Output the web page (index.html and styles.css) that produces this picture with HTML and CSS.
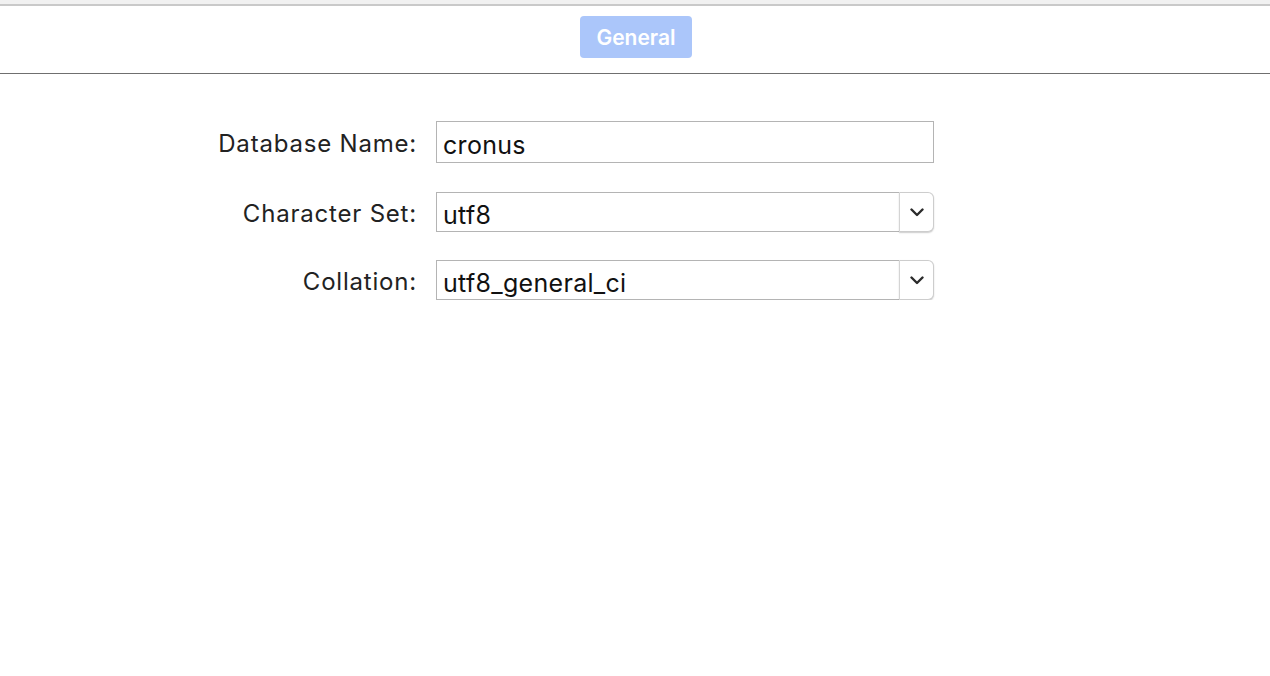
FILE: index.html
```html
<!DOCTYPE html>
<html>
<head>
<meta charset="utf-8">
<link rel="stylesheet" href="styles.css">
</head>
<body>
<div class="topstrip"></div>
<header class="toolbar">
  <div class="tab">General</div>
</header>
<main class="form">
  <label class="lbl lbl-first">Database Name:</label>
  <div class="field">cronus</div>

  <label class="lbl">Character Set:</label>
  <div class="select">
    <div class="select-value">utf8</div>
    <div class="select-btn">
      <svg width="14" height="9" viewBox="0 0 14 9"><path d="M1.5 1.5 L7 7 L12.5 1.5" fill="none" stroke="#2b2b2b" stroke-width="2.4" stroke-linecap="round" stroke-linejoin="round"/></svg>
    </div>
  </div>

  <label class="lbl lbl-third">Collation:</label>
  <div class="select select-third">
    <div class="select-value">utf8_general_ci</div>
    <div class="select-btn">
      <svg width="14" height="9" viewBox="0 0 14 9"><path d="M1.5 1.5 L7 7 L12.5 1.5" fill="none" stroke="#2b2b2b" stroke-width="2.4" stroke-linecap="round" stroke-linejoin="round"/></svg>
    </div>
  </div>
</main>
</body>
</html>
```
FILE: styles.css
```css
html, body {
  margin: 0;
  padding: 0;
  background: #ffffff;
  font-family: Inter, "Liberation Sans", Arial, sans-serif;
}
.topstrip {
  height: 4px;
  background: #f1f1f1;
  border-bottom: 2px solid #c9c9c9;
}
.toolbar {
  height: 68px;
  box-sizing: border-box;
  padding-top: 10px;
  border-bottom: 1px solid #6f6f6f;
  display: flex;
  justify-content: center;
}
.tab {
  width: 112px;
  height: 42px;
  margin-left: 2px;
  border-radius: 4px;
  background: #abc6fa;
  color: #ffffff;
  font-size: 21px;
  font-weight: 600;
  display: flex;
  align-items: center;
  justify-content: center;
}
.form {
  display: grid;
  grid-template-columns: 417px 498px;
  column-gap: 19px;
  padding-top: 47px;
  align-items: center;
}
.lbl {
  text-align: right;
  font-size: 24px;
  letter-spacing: 0.8px;
  color: #222222;
  margin-top: 29px;
  padding-top: 2px;
}
.lbl-first { margin-top: 0; }
.lbl-third { margin-top: 28px; }
.field {
  height: 42px;
  box-sizing: border-box;
  border: 1px solid #b4b4b4;
  padding-left: 6px;
  font-size: 25px;
  letter-spacing: 0.3px;
  color: #111;
  display: flex;
  align-items: center;
  padding-top: 6px;
}
.select {
  height: 40px;
  margin-top: 29px;
  display: flex;
}
.select-third { margin-top: 28px; }
.select-value {
  flex: 1;
  box-sizing: border-box;
  border: 1px solid #b4b4b4;
  border-right: none;
  padding-left: 6px;
  font-size: 25px;
  letter-spacing: 0.3px;
  color: #111;
  display: flex;
  align-items: center;
  padding-top: 5px;
}
.select-btn {
  width: 35px;
  box-sizing: border-box;
  border: 1px solid #cdcdcd;
  border-left: 1px solid #d4d4d4;
  border-radius: 0 6px 6px 0;
  box-shadow: 0 1px 1.5px rgba(0,0,0,0.2);
  display: flex;
  align-items: center;
  justify-content: center;
  background: #fff;
}
```
